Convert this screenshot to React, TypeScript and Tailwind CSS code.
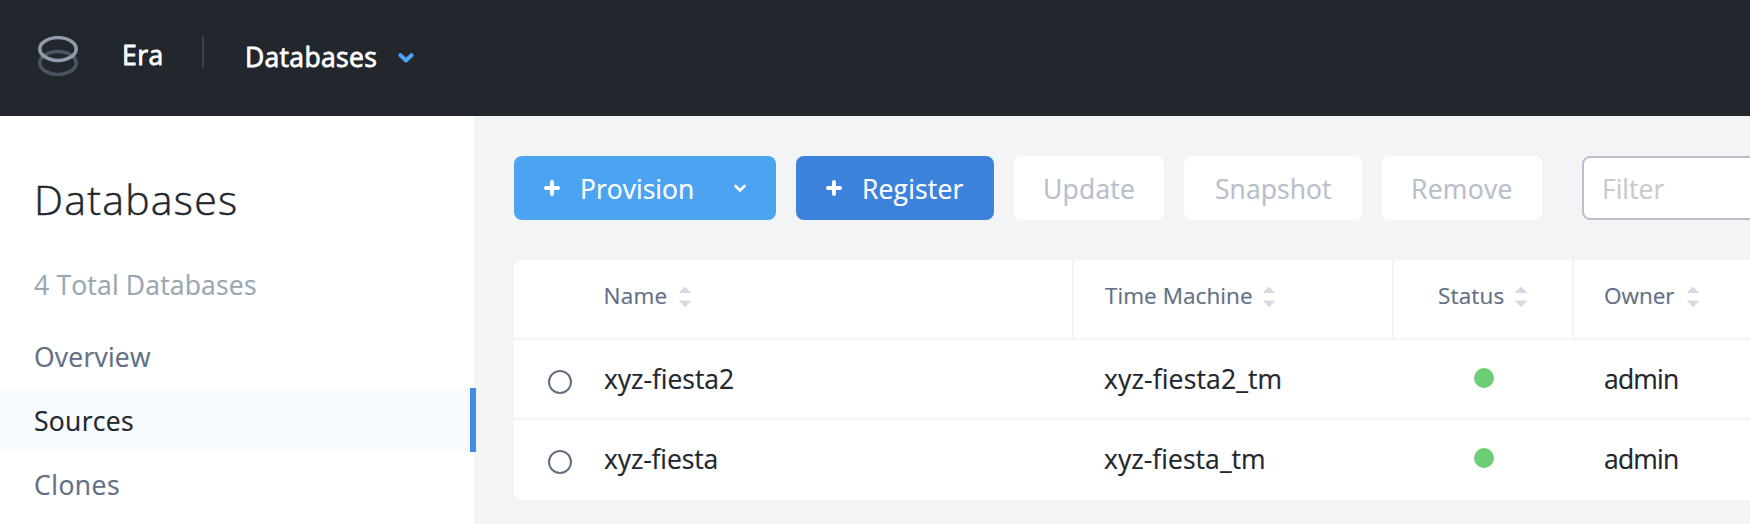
import type { ReactNode } from "react";

function Logo() {
  return (
    <svg className="block h-10 w-10 shrink-0" viewBox="0 0 40 40" fill="none" strokeWidth="3.5">
      <ellipse cx="20" cy="27" rx="18.2" ry="11.4" stroke="#4c5564" />
      <ellipse cx="20" cy="13" rx="18.2" ry="11.4" stroke="#929bac" />
    </svg>
  );
}

function Plus() {
  return (
    <svg className="block h-4 w-4 shrink-0" viewBox="0 0 16 16" stroke="#fff" strokeWidth="4" strokeLinecap="round">
      <path d="M8 2v12M2 8h12" />
    </svg>
  );
}

function Sort() {
  return (
    <svg className="block h-[22px] w-3 shrink-0" viewBox="0 0 12 22" fill="#d5d9e1">
      <path d="M6 .4 11.7 6.2Q12 7 11.2 7H.8Q0 7 .3 6.2ZM6 21.2 11.7 15.2Q12 14.4 11.2 14.4H.8Q0 14.4.3 15.2Z" />
    </svg>
  );
}

function NavItem({ children, active = false }: { children: ReactNode; active?: boolean }) {
  return (
    <li
      className={
        active
          ? "flex h-16 w-[476px] items-center border-r-[6px] border-[#3e8de0] bg-[#f7fbff] pt-0.5 pl-[34px] text-[#22272e]"
          : "flex h-16 items-center pt-0.5 pl-[34px] text-[#627084]"
      }
    >
      {children}
    </li>
  );
}

function Row({ name, last = false }: { name: ReactNode; last?: boolean }) {
  return (
    <div className={last ? "flex h-20 pb-0.5" : "flex h-20 border-b-2 border-[#f2f3f5]"}>
      <div className="flex w-[90px] items-center pt-[6px] pl-[34px]">
        <span className="h-6 w-6 rounded-full border-2 border-[#627084]" />
      </div>
      {name}
      <div className="flex w-[180px] items-center pb-0.5 pl-20">
        <span className="h-5 w-5 rounded-full bg-[#6bcd75]" />
      </div>
      <div className="flex items-center pl-[30px] tracking-[-0.79px]">admin</div>
    </div>
  );
}

export default function App() {
  return (
    <div className="flex h-[524px] w-[1750px] flex-col overflow-hidden bg-[#f2f4f6] font-['Open_Sans',sans-serif] text-[26.5px] leading-9 whitespace-nowrap [-webkit-text-stroke:0.2px]">
      <header className="flex h-[116px] shrink-0 bg-[#22272e] text-white [-webkit-text-stroke:0.8px]">
        <div className="flex w-[122px] pt-9 pl-[38px]">
          <Logo />
        </div>
        <div className="w-20 pt-[37px] tracking-[0.5px]">Era</div>
        <div className="mt-9 h-8 w-0.5 bg-[#3a4250]" />
        <div className="flex pt-[39px] pl-[41px]">
          <span className="w-[153px] tracking-[0.32px]">Databases</span>
          <svg className="mt-[13px] block h-3 w-4" viewBox="0 0 16 12" fill="none" stroke="#4ca3f2" strokeWidth="4" strokeLinecap="round" strokeLinejoin="round">
            <path d="M2.5 3.2 8 8.5l5.5-5.3" />
          </svg>
        </div>
      </header>

      <div className="flex min-h-0 flex-1">
        <aside className="w-[474px] shrink-0 bg-white">
          <h1 className="pt-[59px] pl-[34px] text-[41px] leading-[48px] font-light tracking-[1.27px] text-[#22272e] [-webkit-text-stroke:0.5px]">Databases</h1>
          <p className="mt-11 pl-[34px] tracking-[0.19px] text-[#9aa7b2]">4 Total Databases</p>
          <ul className="mt-[21px]">
            <NavItem><span className="tracking-[0.23px]">Overview</span></NavItem>
            <NavItem active><span className="tracking-[0.31px]">Sources</span></NavItem>
            <NavItem><span className="tracking-[0.51px]">Clones</span></NavItem>
          </ul>
        </aside>

        <main className="flex min-w-0 flex-1 flex-col gap-10 pt-10 pl-10">
          <div className="flex shrink-0 gap-5 text-[#b8bfca]">
            <button className="flex h-16 w-[262px] shrink-0 items-center rounded-lg bg-[#4ca3f2] pl-[30px] text-white">
              <Plus />
              <span className="w-[173px] shrink-0 pt-0.5 pl-5 text-left">Provision</span>
              <svg className="ml-[1px] block h-[9px] w-3" viewBox="0 0 12 9" fill="none" stroke="currentColor" strokeWidth="2.6" strokeLinecap="round" strokeLinejoin="round">
                <path d="M1.5 2 6 6.5 10.5 2" />
              </svg>
            </button>
            <button className="flex h-16 w-[198px] shrink-0 items-center rounded-lg bg-[#3d82dc] pl-[30px] text-white">
              <Plus />
              <span className="pt-0.5 pl-5 tracking-[0.18px]">Register</span>
            </button>
            <button className="flex h-16 w-[150px] shrink-0 items-center rounded-lg bg-white pt-0.5 pl-[29px] tracking-[0.22px]">Update</button>
            <button className="flex h-16 w-[178px] shrink-0 items-center rounded-lg bg-white pt-0.5 pl-[31px] tracking-[0.07px]">Snapshot</button>
            <button className="flex h-16 w-40 shrink-0 items-center rounded-lg bg-white pt-0.5 pl-[29px] tracking-[0.31px]">Remove</button>
            <div className="ml-5 h-16 w-[300px] shrink-0 bg-white">
              <div className="flex h-16 items-center rounded-lg border-2 border-[#b8bfca] pt-0.5 pl-[18px] text-[#cacaca]">Filter</div>
            </div>
          </div>

          <div className="h-60 shrink-0 rounded-l-lg bg-white text-[#22272e]">
            <div className="flex h-20 border-b-2 border-[#f2f3f5] text-[22.5px] text-[#627084]">
              <div className="flex w-[560px] items-center border-r-2 border-[#f2f3f5] pb-1 pl-[89.5px]">
                <span className="w-[75.5px] pb-0.5 tracking-[0.24px]">Name</span>
                <Sort />
              </div>
              <div className="flex w-80 items-center border-r-2 border-[#f2f3f5] pb-1 pl-[31px]">
                <span className="w-[158px] pb-0.5 tracking-[0.07px]">Time Machine</span>
                <Sort />
              </div>
              <div className="flex w-[180px] items-center border-r-2 border-[#f2f3f5] pb-1 pl-11">
                <span className="w-[77px] pb-0.5 tracking-[0.16px]">Status</span>
                <Sort />
              </div>
              <div className="flex items-center pb-1 pl-[30px]">
                <span className="w-[83px] pb-0.5">Owner</span>
                <Sort />
              </div>
            </div>
            <Row
              name={
                <>
                  <div className="flex w-[500px] items-center tracking-[-0.04px]">xyz-fiesta2</div>
                  <div className="flex w-[290px] items-center tracking-[0.15px]">xyz-fiesta2_tm</div>
                </>
              }
            />
            <Row
              last
              name={
                <>
                  <div className="flex w-[500px] items-center tracking-[-0.13px]">xyz-fiesta</div>
                  <div className="flex w-[290px] items-center tracking-[0.05px]">xyz-fiesta_tm</div>
                </>
              }
            />
          </div>
        </main>
      </div>
    </div>
  );
}
